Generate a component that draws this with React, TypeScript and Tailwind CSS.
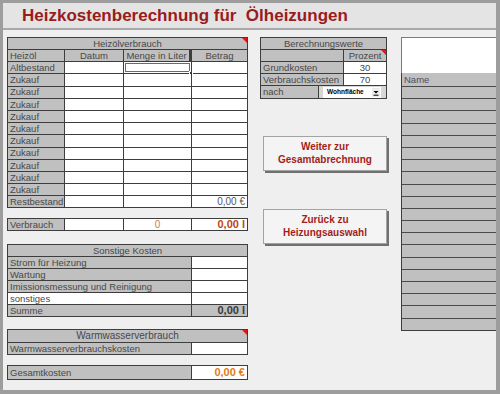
import clsx from 'clsx';
import type { ReactNode } from 'react';

// Kommentar-Markierung wie in Excel (rotes Dreieck oben rechts)
function Tri() {
  return (
    <span className="absolute right-0 top-0 h-0 w-0 border-l-[5px] border-t-[5px] border-l-transparent border-t-[#e3161b]" />
  );
}

function Cell({
  w,
  white,
  first,
  className,
  children,
}: {
  w: string;
  white?: boolean;
  first?: boolean;
  className?: string;
  children?: ReactNode;
}) {
  return (
    <div
      className={clsx(
        'relative flex h-full items-center whitespace-nowrap px-[2px]',
        w,
        white ? 'bg-white' : 'bg-[#c0c0c0]',
        !first && 'border-l border-[#3d3d3d]',
        className,
      )}
    >
      {children}
    </div>
  );
}

function Row({ h = 'h-[12.2px]', children }: { h?: string; children: ReactNode }) {
  return <div className={clsx('flex border-t border-[#3d3d3d]', h)}>{children}</div>;
}

function Header({ children, mark }: { children: ReactNode; mark?: boolean }) {
  return (
    <div className="relative flex h-[11px] items-center justify-center bg-[#c0c0c0]">
      {children}
      {mark && <Tri />}
    </div>
  );
}

function OilTable() {
  const rows = ['Altbestand', ...Array(10).fill('Zukauf')];
  return (
    <div className="w-[241px] border border-[#3d3d3d]">
      <Header mark>Heizölverbrauch</Header>
      <Row>
        <Cell w="w-[56px]" first>Heizöl</Cell>
        <Cell w="w-[59px]" className="justify-center">Datum</Cell>
        <Cell w="w-[68px]" className="justify-center border-x-2 border-[#2a2a2a]">
          Menge in Liter
        </Cell>
        <Cell w="w-[56px]" className="justify-center">Betrag</Cell>
      </Row>
      {rows.map((label, i) => (
        <Row key={i}>
          <Cell w="w-[56px]" first>{label}</Cell>
          <Cell w="w-[59px]" white />
          <Cell w="w-[68px]" white>
            {i === 0 && (
              <>
                <span className="absolute inset-[1px] border border-[#6a6a6a]" />
                <span className="absolute -bottom-[2px] -right-[2px] h-[4px] w-[4px] border border-white bg-[#333]" />
              </>
            )}
          </Cell>
          <Cell w="w-[56px]" white />
        </Row>
      ))}
      <Row>
        <Cell w="w-[56px]" first>Restbestand</Cell>
        <Cell w="w-[59px]" white />
        <Cell w="w-[68px]" white />
        <Cell w="w-[56px]" white className="justify-end text-[10px] text-[#555]">
          0,00 €
        </Cell>
      </Row>
    </div>
  );
}

function OtherCosts() {
  const items = ['Strom für Heizung', 'Wartung', 'Imissionsmessung und Reinigung'];
  return (
    <div className="mt-[13px] w-[241px] border border-[#3d3d3d]">
      <Header>Sonstige Kosten</Header>
      {items.map((t) => (
        <Row key={t} h="h-[12px]">
          <Cell w="w-[183px]" first>{t}</Cell>
          <Cell w="w-[56px]" white />
        </Row>
      ))}
      <Row h="h-[12px]">
        <Cell w="w-[183px]" first white>sonstiges</Cell>
        <Cell w="w-[56px]" white />
      </Row>
      <Row h="h-[12px]">
        <Cell w="w-[183px]" first>Summe</Cell>
        <Cell w="w-[56px]" className="justify-end text-[11px] font-bold text-[#3a3a3a]">
          0,00 l
        </Cell>
      </Row>
    </div>
  );
}

function CalcValues() {
  return (
    <div className="w-[127px] border border-[#3d3d3d]">
      <Header>Berechnungswerte</Header>
      <Row h="h-[12px]">
        <Cell w="w-[82px]" first />
        <Cell w="w-[43px]" className="justify-center">
          Prozent
          <Tri />
        </Cell>
      </Row>
      <Row h="h-[12px]">
        <Cell w="w-[82px]" first>Grundkosten</Cell>
        <Cell w="w-[43px]" white className="justify-center">30</Cell>
      </Row>
      <Row h="h-[12px]">
        <Cell w="w-[82px]" first>Verbrauchskosten</Cell>
        <Cell w="w-[43px]" white className="justify-center">70</Cell>
      </Row>
      <Row h="h-[13px]">
        <Cell w="w-[57px]" first>nach</Cell>
        <div className="flex h-full w-[68px] items-center border-l border-[#3d3d3d] bg-[#d6d6d6] pl-[4px]">
          <div className="flex h-[11px] w-[58px] items-center justify-between bg-white pl-[4px] pr-[1px]">
            <span className="text-[6.5px] font-bold text-black">Wohnfläche</span>
            <svg width="8" height="9" viewBox="0 0 8 9" className="bg-[#ececec]">
              <path d="M1.5 3h5L4 5.6z" fill="#000" />
              <path d="M1.5 7.2h5" stroke="#000" strokeWidth="1" />
            </svg>
          </div>
        </div>
      </Row>
    </div>
  );
}

function Button({ top, lines }: { top: string; lines: [string, string] }) {
  return (
    <button
      className={clsx(
        'ml-[3px] flex h-[35px] w-[124px] flex-col items-center justify-center border border-[#a3a3a3] bg-[#f4f4f4] text-[10px] font-bold leading-[12.5px] text-[#a31d1d] shadow-[2px_2px_0_#707070]',
        top,
      )}
    >
      <span>{lines[0]}</span>
      <span>{lines[1]}</span>
    </button>
  );
}

export default function App() {
  return (
    <div className="flex h-[394px] w-[500px] flex-col bg-[#9d9d9d] pb-[4px] pl-[3px] pr-[4px] pt-[3px] font-['Liberation_Sans',Arial,sans-serif] text-[9.5px] leading-none text-[#484848]">
      <div className="h-[27px] border-b-2 border-[#a9a9a9] bg-[#e4e4e4] pl-[19px] pt-[4px] text-[17px] font-bold leading-none text-[#9a1b1e]">
        Heizkostenberechnung für&nbsp; Ölheizungen
      </div>

      <div className="flex flex-1 bg-[#efefef] pl-[4px] pt-[7px]">
        {/* linke Spalte */}
        <div className="flex w-[241px] flex-col">
          <OilTable />

          <div className="mt-[10px] flex h-[13px] w-[241px] border border-[#3d3d3d]">
            <Cell w="w-[56px]" first>Verbrauch</Cell>
            <Cell w="w-[59px]" white />
            <Cell w="w-[68px]" white className="justify-center text-[10px] text-[#cf7a4c]">0</Cell>
            <Cell w="w-[56px]" white className="justify-end text-[11px] font-bold text-[#bd4510]">
              0,00 l
            </Cell>
          </div>

          <OtherCosts />

          <div className="mt-[12px] w-[241px] border border-[#3d3d3d]">
            <div className="relative flex h-[12px] items-center justify-center bg-[#c0c0c0] text-[10px]">
              Warmwasserverbrauch
              <Tri />
            </div>
            <Row h="h-[12px]">
              <Cell w="w-[183px]" first>Warmwasserverbrauchskosten</Cell>
              <Cell w="w-[56px]" white />
            </Row>
          </div>

          <div className="mt-[10px] flex h-[15px] w-[241px] border border-[#3d3d3d]">
            <Cell w="w-[183px]" first>Gesamtkosten</Cell>
            <Cell w="w-[56px]" white className="justify-end text-[11px] font-bold text-[#e27b1c]">
              0,00 €
            </Cell>
          </div>
        </div>

        {/* mittlere Spalte */}
        <div className="ml-[12px] flex w-[127px] flex-col">
          <CalcValues />
          <Button top="mt-[37px]" lines={['Weiter zur', 'Gesamtabrechnung']} />
          <Button top="mt-[38px]" lines={['Zurück zu', 'Heizungsauswahl']} />
        </div>

        {/* rechte Spalte */}
        <div className="ml-[14px] flex w-[95px] flex-col self-start">
          <div className="h-[36px] border-l border-t border-[#7a7a7a] bg-white" />
          <div className="border-b border-l border-[#3d3d3d] bg-[#c0c0c0]">
            <div className="flex h-[13px] items-center px-[2px] text-[#4f4f60]">Name</div>
            {Array.from({ length: 20 }).map((_, i) => (
              <div key={i} className="h-[12.2px] border-t border-[#4a4a4a]" />
            ))}
          </div>
        </div>
      </div>
    </div>
  );
}
